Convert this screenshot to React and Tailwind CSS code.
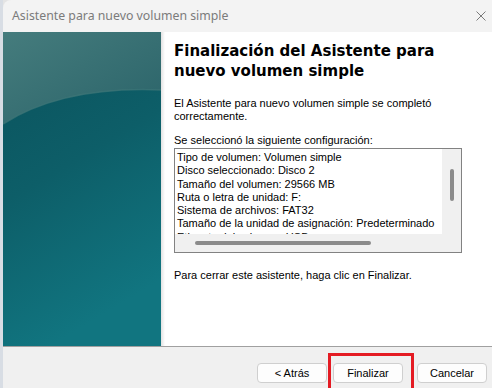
import React from "react";

const rows = [
  "Tipo de volumen: Volumen simple",
  "Disco seleccionado: Disco 2",
  "Tamaño del volumen: 29566 MB",
  "Ruta o letra de unidad: F:",
  "Sistema de archivos: FAT32",
  "Tamaño de la unidad de asignación: Predeterminado",
  "Etiqueta del volumen: USB",
];

const WizardArt = () => (
  <svg width="158" height="314" viewBox="0 0 158 314" className="block">
    <defs>
      <linearGradient id="base" x1="0" y1="0" x2="0.3" y2="1">
        <stop offset="0" stopColor="#0b525c" />
        <stop offset="0.5" stopColor="#0d5e68" />
        <stop offset="1" stopColor="#117580" />
      </linearGradient>
      <linearGradient id="sheen" x1="0" y1="0" x2="1" y2="1">
        <stop offset="0" stopColor="#457c7d" />
        <stop offset="1" stopColor="#2a6369" />
      </linearGradient>
    </defs>
    <rect width="158" height="314" fill="url(#base)" />
    <path d="M0 0 H158 V58 Q60 54 0 92 Z" fill="url(#sheen)" />
    <path d="M0 92 Q60 54 158 58" fill="none" stroke="#3f7677" strokeWidth="1.5" opacity="0.7" />
  </svg>
);

const Btn = ({ children }) => (
  <button
    type="button"
    className="flex h-[20px] w-[70px] items-center justify-center rounded-[4px] border border-[#cfcfcf] bg-[#fdfdfd] text-[11px] text-black font-['Liberation_Sans',Arial,sans-serif] leading-none"
  >
    {children}
  </button>
);

export default function App() {
  return (
    <div className="flex w-[492px] h-[388px] overflow-hidden bg-[#e4e4e4]">
      <div className="w-[3px] shrink-0 bg-[#d8dde4]" />
      <div className="flex flex-1 flex-col rounded-tl-[8px] overflow-hidden bg-[#f3f3f3]">
        {/* Title bar */}
        <div className="flex h-[32px] shrink-0 items-center justify-between pl-[9px] pr-[6px]">
          <span className="text-[12.3px] text-[#7b7b7b] font-['Noto_Sans',sans-serif]">
            Asistente para nuevo volumen simple
          </span>
          <svg width="10" height="10" viewBox="0 0 10 10">
            <path d="M0.5 0.5 L9.5 9.5 M9.5 0.5 L0.5 9.5" stroke="#7a7a7a" strokeWidth="1" />
          </svg>
        </div>

        {/* Body */}
        <div className="flex h-[314px] shrink-0 bg-white">
          <WizardArt />
          <div className="w-[4px] shrink-0 bg-gradient-to-r from-[#e2e2e2] to-white" />
          <div className="flex-1 pl-[9px] pt-[9px] text-black font-['Liberation_Sans',Arial,sans-serif] text-[11px] leading-[13px]">
            <h1 className="text-[15px] leading-[20px] font-bold font-['DejaVu_Sans',Verdana,sans-serif]">
              Finalización del Asistente para
              <br />
              nuevo volumen simple
            </h1>
            <p className="mt-[16px]">
              El Asistente para nuevo volumen simple se completó
              <br />
              correctamente.
            </p>
            <p className="mt-[11px]">Se seleccionó la siguiente configuración:</p>
            <div className="mt-[1px] flex w-[288px] h-[105px] border border-[#828282]">
              <div className="flex flex-1 flex-col">
                <div className="h-[85px] overflow-hidden bg-white pl-[2px] pt-[2px] whitespace-nowrap leading-[13.3px]">
                  {rows.map((r) => (
                    <div key={r}>{r}</div>
                  ))}
                </div>
                <div className="flex flex-1 items-center bg-[#f0f0f0] pl-[20px]">
                  <div className="h-[4px] w-[176px] rounded-full bg-[#8b8b8b]" />
                </div>
              </div>
              <div className="w-[19px] bg-[#f0f0f0] pt-[20px] flex justify-center">
                <div className="h-[32px] w-[4px] rounded-full bg-[#8b8b8b]" />
              </div>
            </div>
            <p className="mt-[16px]">Para cerrar este asistente, haga clic en Finalizar.</p>
          </div>
        </div>

        <div className="h-px shrink-0 bg-[#a0a0a0]" />

        {/* Buttons */}
        <div className="flex flex-1 items-start justify-end bg-[#f0f0f0] pt-[16px] pr-[5px]">
          <Btn>&lt; Atrás</Btn>
          <div className="relative ml-[6px] flex">
            <Btn>Finalizar</Btn>
            <div className="absolute left-[-5px] top-[-10px] w-[86px] h-[40px] border-[3px] border-[#e41b23]" />
          </div>
          <div className="ml-[14px] flex">
            <Btn>Cancelar</Btn>
          </div>
        </div>
      </div>
    </div>
  );
}
